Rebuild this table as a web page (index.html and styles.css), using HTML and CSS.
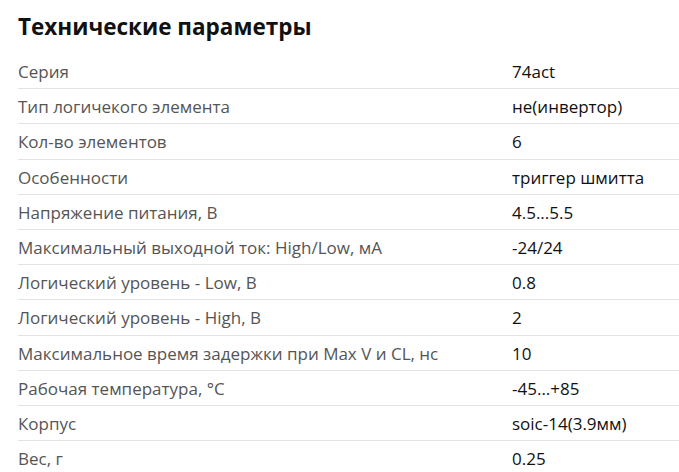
FILE: index.html
```html
<!DOCTYPE html>
<html lang="ru">
<head>
<meta charset="utf-8">
<link rel="stylesheet" href="styles.css">
</head>
<body>
<section class="specs">
  <h2 class="specs-title">Технические параметры</h2>
  <dl class="specs-list">
    <div class="row"><dt>Серия</dt><dd>74act</dd></div>
    <div class="row"><dt>Тип логичекого элемента</dt><dd>не(инвертор)</dd></div>
    <div class="row"><dt>Кол-во элементов</dt><dd>6</dd></div>
    <div class="row"><dt>Особенности</dt><dd>триггер шмитта</dd></div>
    <div class="row"><dt>Напряжение питания, В</dt><dd>4.5...5.5</dd></div>
    <div class="row"><dt>Максимальный выходной ток: High/Low, мА</dt><dd>-24/24</dd></div>
    <div class="row"><dt>Логический уровень - Low, В</dt><dd>0.8</dd></div>
    <div class="row"><dt>Логический уровень - High, В</dt><dd>2</dd></div>
    <div class="row"><dt>Максимальное время задержки при Max V и CL, нс</dt><dd>10</dd></div>
    <div class="row"><dt>Рабочая температура, °С</dt><dd>-45...+85</dd></div>
    <div class="row"><dt>Корпус</dt><dd>soic-14(3.9мм)</dd></div>
    <div class="row"><dt>Вес, г</dt><dd>0.25</dd></div>
  </dl>
</section>
</body>
</html>
```
FILE: styles.css
```css
html, body {
  margin: 0;
  padding: 0;
  background: #fff;
}
body {
  font-family: "Open Sans", "Liberation Sans", sans-serif;
}
.specs {
  padding: 12px 0 0 18px;
}
.specs-title {
  margin: 0 0 12px;
  font-size: 22.5px;
  line-height: 30px;
  font-weight: 700;
  color: #111;
}
.specs-list {
  margin: 0;
}
.row {
  display: grid;
  grid-template-columns: 494px 1fr;
  border-bottom: 1px solid #e3e3e3;
}
.row:last-child {
  border-bottom: none;
}
.row dt, .row dd {
  margin: 0;
  padding: 7px 0 5.2px;
  font-size: 17px;
  line-height: 22px;
}
.row dt {
  color: #555;
}
.row dd {
  color: #111;
}
```
